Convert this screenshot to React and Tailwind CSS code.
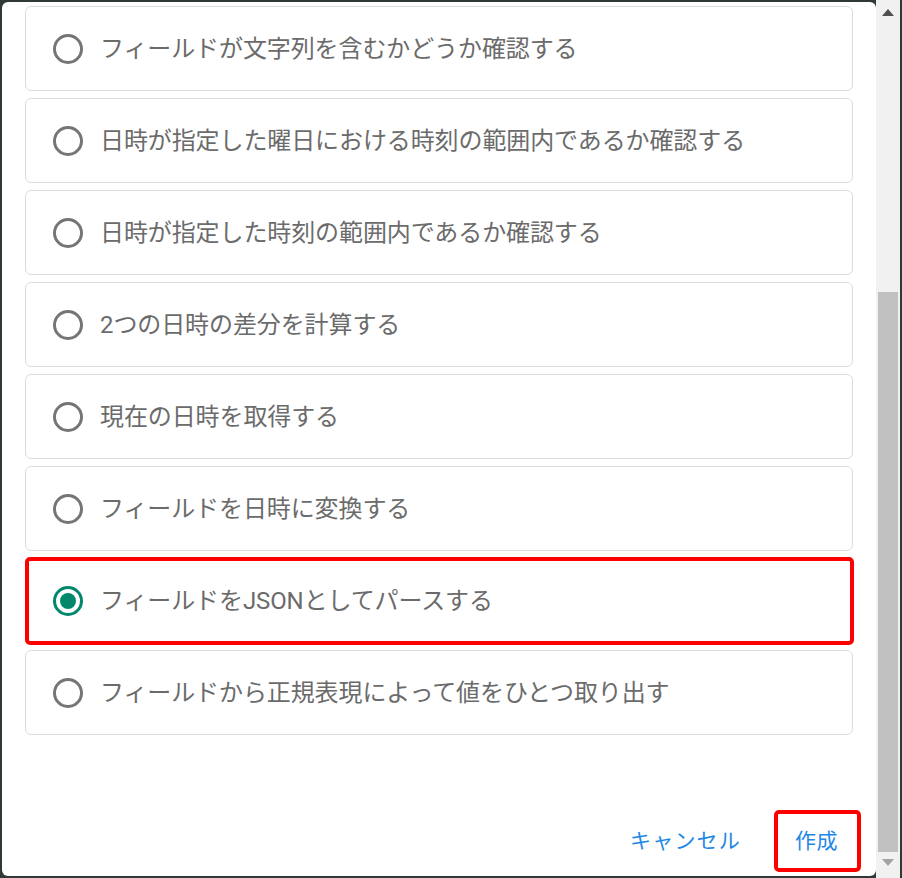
import React from "react";

const items = [
  "フィールドが文字列を含むかどうか確認する",
  "日時が指定した曜日における時刻の範囲内であるか確認する",
  "日時が指定した時刻の範囲内であるか確認する",
  "2つの日時の差分を計算する",
  "現在の日時を取得する",
  "フィールドを日時に変換する",
  "フィールドをJSONとしてパースする",
  "フィールドから正規表現によって値をひとつ取り出す",
];

function Radio({ checked }) {
  if (checked) {
    return (
      <span className="flex h-[30px] w-[30px] shrink-0 items-center justify-center rounded-full border-[3px] border-[#00876c]">
        <span className="h-[16px] w-[16px] rounded-full bg-[#00876c]" />
      </span>
    );
  }
  return <span className="h-[30px] w-[30px] shrink-0 rounded-full border-[3px] border-[#757575]" />;
}

export default function App() {
  return (
    <div
      className="flex h-[878px] w-[902px] overflow-hidden bg-[#2f3a37]"
      style={{ fontFamily: "Roboto, 'Noto Sans CJK JP', sans-serif" }}
    >
      <div className="mt-[2px] ml-[2px] flex h-[874px] w-[874px] flex-col rounded-[6px] bg-white">
        <div className="flex flex-col gap-[7px] pt-[4px] pl-[23px] pr-[23px]">
          {items.map((t, i) => {
            const sel = i === 6;
            return (
              <div
                key={i}
                className={
                  sel
                    ? "-mt-[1px] -mb-[2px] -mr-[1px] flex h-[88px] items-center gap-[17px] rounded-[5px] border-[4px] border-[#ff0000] pl-[24px]"
                    : "flex h-[85px] items-center gap-[17px] rounded-[6px] border border-[#dcdcdc] pl-[27px]"
                }
              >
                <Radio checked={sel} />
                <span className="text-[24px] leading-none tracking-[-0.1px] text-[#6b6b6b]">{t}</span>
              </div>
            );
          })}
        </div>
        <div className="mt-auto mb-[4px] flex items-center justify-end gap-[11px] pr-[15px]">
          <button className="px-[22px] py-[16px] text-[21px] leading-none tracking-[1.2px] text-[#1e88e5]">
            キャンセル
          </button>
          <button className="flex h-[62px] w-[87px] items-center justify-center rounded-[5px] border-[4px] border-[#ff0000] pr-[2px] text-[21px] leading-none tracking-[0.6px] text-[#1e88e5]">
            作成
          </button>
        </div>
      </div>
      <div className="flex h-[878px] w-[24px] flex-col bg-[#f1f1f1]">
        <div className="flex h-[20px] items-center justify-center pt-[4px]">
          <svg width="12" height="7" viewBox="0 0 12 7">
            <polygon points="6,0 12,7 0,7" fill="#505050" />
          </svg>
        </div>
        <div className="mt-[272px] mx-[2px] h-[560px] bg-[#c1c1c1]" />
        <div className="flex h-[20px] items-center justify-center">
          <svg width="12" height="7" viewBox="0 0 12 7">
            <polygon points="0,0 12,0 6,7" fill="#a3a3a3" />
          </svg>
        </div>
      </div>
      <div className="w-[2px] bg-[#2f3a37]" />
    </div>
  );
}
